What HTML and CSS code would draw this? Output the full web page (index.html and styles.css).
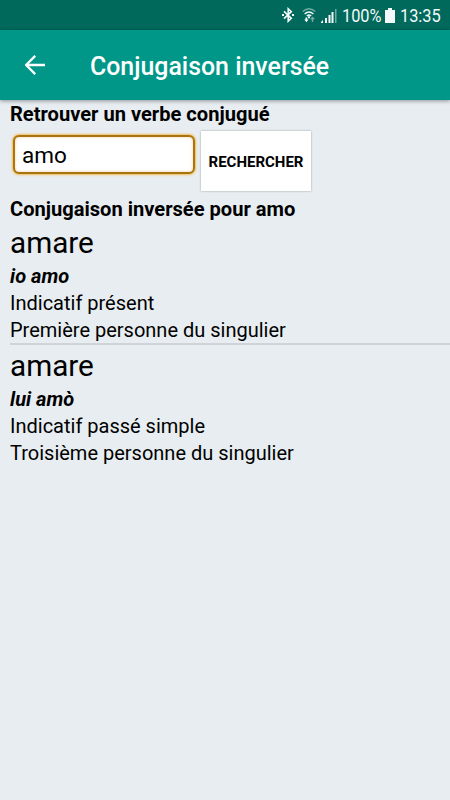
FILE: index.html
```
<!DOCTYPE html>
<html lang="fr">
<head>
<meta charset="utf-8">
<title>Conjugaison inversée</title>
<link rel="stylesheet" href="styles.css">
</head>
<body>
<div class="status">
  <svg class="bluetooth" viewBox="0 0 12 16"><path d="M2 4.3 9.3 11.3 6.2 14.2V1.8L9.3 4.7 2 11.7"/><path class="dots" d="M0 7h2v2H0zM10 7h2v2h-2z"/></svg>
  <svg class="wifi" viewBox="0 0 14 16"><g class="faint"><path d="M.8 4.5Q7-1.2 13.2 4.5"/><path d="M10.5 15V10.5M8.7 12.3 10.5 10.5 12.3 12.3"/></g><path d="M2.6 7Q7 3 11.4 7M4.8 9Q7 7 9.2 9"/><path class="dots" d="M6 9.2h2v2H6zM3.5 10.5h1.8v2h1.2L4.4 15.3 2.3 12.5h1.2z"/></svg>
  <svg class="signal" viewBox="0 0 16 15"><path d="M0 15v-1l2-2v3zM4 10h2v5H4zM7.5 7h2v8h-2zM10.5 4h2v11h-2z"/><path class="faint" d="M14 1h1.5v14H14z"/></svg>
  <span class="percent"><span class="narrow">100%</span></span>
  <svg class="battery" viewBox="0 0 10 15"><path d="M3 0h4v2h3v13H0V2h3z"/></svg>
  <span class="clock"><span class="narrow">13:35</span></span>
</div>
<header class="bar">
  <svg class="back" viewBox="0 0 20 20"><path d="M20 10H1.5M10.2.9 1.1 10l9.1 9.1"/></svg>
  <h1>Conjugaison inversée</h1>
</header>
<main>
  <label class="label" for="verb">Retrouver un verbe conjugué</label>
  <div class="search">
    <input id="verb" type="text" value="amo">
    <button type="button">RECHERCHER</button>
  </div>
  <h2 class="label">Conjugaison inversée pour amo</h2>
  <section class="result">
    <h3>amare</h3>
    <p class="form">io amo</p>
    <p>Indicatif présent</p>
    <p>Première personne du singulier</p>
  </section>
  <section class="result">
    <h3>amare</h3>
    <p class="form">lui amò</p>
    <p>Indicatif passé simple</p>
    <p>Troisième personne du singulier</p>
  </section>
</main>
</body>
</html>
```
FILE: styles.css
```
* { box-sizing: border-box; }
body {
  margin: 0;
  height: 800px;
  overflow: hidden;
  background: #e8edf1;
  color: #000;
  font: 20px/27px Roboto, sans-serif;
}
h1, h2, h3, p { margin: 0; }
.status {
  height: 30px;
  display: flex;
  align-items: center;
  padding: 1px 0 0 282px;
  background: #00695c;
  color: #f4faf9;
}
.status svg { flex: none; fill: #f4faf9; }
.bluetooth { width: 12px; height: 16px; margin-top: -1px; }
.bluetooth path, .wifi path { fill: none; stroke: #f4faf9; stroke-width: 1.6; }
.wifi path { stroke-width: 1.4; }
.status svg .dots { fill: #f4faf9; stroke: none; }
.wifi { width: 14px; height: 16px; margin: -1px 0 0 8px; }
.signal { width: 16px; height: 15px; margin-left: 5px; }
.faint { opacity: .45; }
.battery { width: 10px; height: 15px; margin-left: 3px; }
.percent { width: 40px; margin-left: 5px; }
.clock { width: 42px; margin-left: 5px; }
.narrow {
  display: inline-block;
  font-size: 19px;
  transform: scaleX(.86);
  transform-origin: left;
}
.bar {
  position: relative;
  height: 70px;
  display: flex;
  align-items: center;
  padding: 1px 0 0 25px;
  background: #009788;
  color: #fff;
  box-shadow: 0 1px 4px rgba(0, 0, 0, .4);
}
.back {
  width: 20px;
  height: 20px;
  margin: -1px 45px 0 0;
  fill: none;
  stroke: #fff;
  stroke-width: 2.3;
}
h1 { font-size: 24.9px; font-weight: 500; line-height: 32px; padding-top: 2px; }
main { padding: 1px 0 0 10px; }
.label { display: block; font-size: 20.1px; font-weight: 700; line-height: 27px; }
.search { display: flex; align-items: flex-start; height: 68px; padding: 3px 0 0 3px; }
input {
  width: 182px;
  height: 39px;
  margin: 4px 6px 0 0;
  padding: 0 7px;
  border: 2px solid #a97512;
  border-radius: 6px;
  outline: none;
  background: #fff;
  box-shadow: 0 0 2px 1px #f2bd58, inset 0 0 3px #f5c99b;
  color: #000;
  font: 22.5px Roboto, sans-serif;
}
button {
  width: 110px;
  height: 60px;
  padding: 2px 0 0;
  border: 0;
  background: #fff;
  box-shadow: 0 0 2px rgba(0, 0, 0, .35);
  color: #000;
  font: 700 15px Roboto, sans-serif;
  white-space: nowrap;
}
.result { height: 120px; }
.result + .result { padding-top: 1px; border-top: 2px solid #d0d4d8; }
.result h3 { height: 40px; font-size: 29.7px; font-weight: 400; line-height: 40px; }
.result .form { font-weight: 700; font-style: italic; }
```
